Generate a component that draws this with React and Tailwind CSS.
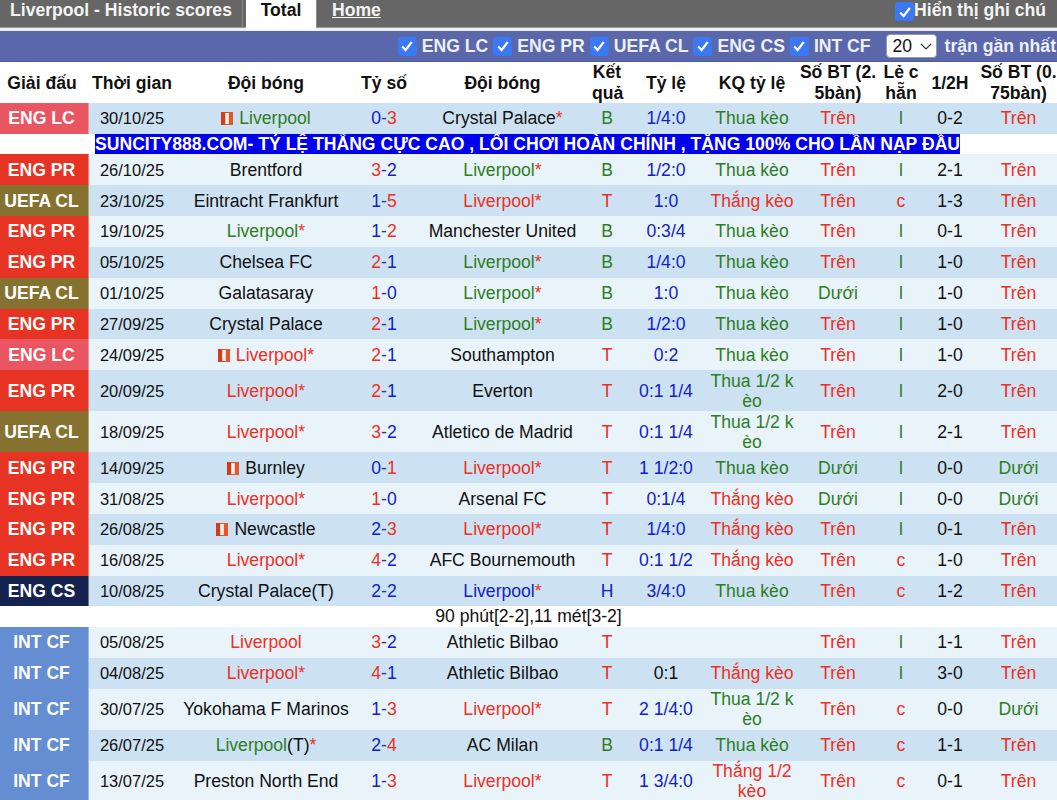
const F = "font-['Liberation_Sans',Arial,sans-serif]";
const LG = {
  "ENG LC": "bg-[#ea5562]",
  "ENG PR": "bg-[#e73323]",
  "UEFA CL": "bg-[#867230]",
  "ENG CS": "bg-[#14234f]",
  "INT CF": "bg-[#648dd2]",
};
const COLS = "grid grid-cols-[89px_82px_184px_58px_179px_30px_88px_84px_88px_38px_60px_77px]";
const CL = {
  g: "text-[#2f7d1e]",
  r: "text-[#ee2f24]",
  b: "text-[#1320c8]",
  k: "text-[#111111]",
};

function Flag() {
  return (
    <svg width="12" height="13" viewBox="0 0 12 13" className="inline-block mr-[6px] align-[-1px]">
      <rect width="12" height="13" fill="#e4572a" />
      <rect width="4" height="13" fill="#d23c1c" />
      <rect x="4.2" y="1" width="3.6" height="11" fill="#fdf3ec" />
    </svg>
  );
}

function Score({ v }) {
  const [a, b] = v.split("-");
  const ca = +a > +b ? CL.r : CL.b;
  const cb = +b > +a ? CL.r : CL.b;
  return (
    <div className="text-center whitespace-nowrap">
      <span className={ca}>{a}</span>
      <span className="text-[#333a80]">-</span>
      <span className={cb}>{b}</span>
    </div>
  );
}

function Team({ n, c = "k", flag, star, suffix, first }) {
  return (
    <div className={`text-center whitespace-nowrap ${first ? "pl-[6px]" : ""}`}>
      {flag && <Flag />}
      <span className={CL[c]}>{n}</span>
      {suffix && <span className={CL.k}>{suffix}</span>}
      {star && <span className={CL.r}>*</span>}
    </div>
  );
}

const rows = [
  { l: "ENG LC", d: "30/10/25", a: { n: "Liverpool", c: "g", flag: 1 }, s: "0-3", h: { n: "Crystal Palace", star: 1 }, r: "B", o: "1/4:0", oc: "b", k: ["Thua kèo"], kc: "g", bt: "Trên", lc: "l", hf: "0-2", b2: "Trên" },
  { banner: 1 },
  { l: "ENG PR", d: "26/10/25", a: { n: "Brentford" }, s: "3-2", h: { n: "Liverpool", c: "g", star: 1 }, r: "B", o: "1/2:0", oc: "b", k: ["Thua kèo"], kc: "g", bt: "Trên", lc: "l", hf: "2-1", b2: "Trên" },
  { l: "UEFA CL", d: "23/10/25", a: { n: "Eintracht Frankfurt" }, s: "1-5", h: { n: "Liverpool", c: "r", star: 1 }, r: "T", o: "1:0", oc: "b", k: ["Thắng kèo"], kc: "r", bt: "Trên", lc: "c", hf: "1-3", b2: "Trên" },
  { l: "ENG PR", d: "19/10/25", a: { n: "Liverpool", c: "g", star: 1 }, s: "1-2", h: { n: "Manchester United" }, r: "B", o: "0:3/4", oc: "b", k: ["Thua kèo"], kc: "g", bt: "Trên", lc: "l", hf: "0-1", b2: "Trên" },
  { l: "ENG PR", d: "05/10/25", a: { n: "Chelsea FC" }, s: "2-1", h: { n: "Liverpool", c: "g", star: 1 }, r: "B", o: "1/4:0", oc: "b", k: ["Thua kèo"], kc: "g", bt: "Trên", lc: "l", hf: "1-0", b2: "Trên" },
  { l: "UEFA CL", d: "01/10/25", a: { n: "Galatasaray" }, s: "1-0", h: { n: "Liverpool", c: "g", star: 1 }, r: "B", o: "1:0", oc: "b", k: ["Thua kèo"], kc: "g", bt: "Dưới", btc: "g", lc: "l", hf: "1-0", b2: "Trên" },
  { l: "ENG PR", d: "27/09/25", a: { n: "Crystal Palace" }, s: "2-1", h: { n: "Liverpool", c: "g", star: 1 }, r: "B", o: "1/2:0", oc: "b", k: ["Thua kèo"], kc: "g", bt: "Trên", lc: "l", hf: "1-0", b2: "Trên" },
  { l: "ENG LC", d: "24/09/25", a: { n: "Liverpool", c: "r", star: 1, flag: 1 }, s: "2-1", h: { n: "Southampton" }, r: "T", o: "0:2", oc: "b", k: ["Thua kèo"], kc: "g", bt: "Trên", lc: "l", hf: "1-0", b2: "Trên" },
  { l: "ENG PR", d: "20/09/25", a: { n: "Liverpool", c: "r", star: 1 }, s: "2-1", h: { n: "Everton" }, r: "T", o: "0:1 1/4", oc: "b", k: ["Thua 1/2 k", "èo"], kc: "g", bt: "Trên", lc: "l", hf: "2-0", b2: "Trên" },
  { l: "UEFA CL", d: "18/09/25", a: { n: "Liverpool", c: "r", star: 1 }, s: "3-2", h: { n: "Atletico de Madrid" }, r: "T", o: "0:1 1/4", oc: "b", k: ["Thua 1/2 k", "èo"], kc: "g", bt: "Trên", lc: "l", hf: "2-1", b2: "Trên" },
  { l: "ENG PR", d: "14/09/25", a: { n: "Burnley", flag: 1 }, s: "0-1", h: { n: "Liverpool", c: "r", star: 1 }, r: "T", o: "1 1/2:0", oc: "b", k: ["Thua kèo"], kc: "g", bt: "Dưới", btc: "g", lc: "l", hf: "0-0", b2: "Dưới", b2c: "g" },
  { l: "ENG PR", d: "31/08/25", a: { n: "Liverpool", c: "r", star: 1 }, s: "1-0", h: { n: "Arsenal FC" }, r: "T", o: "0:1/4", oc: "b", k: ["Thắng kèo"], kc: "r", bt: "Dưới", btc: "g", lc: "l", hf: "0-0", b2: "Dưới", b2c: "g" },
  { l: "ENG PR", d: "26/08/25", a: { n: "Newcastle", flag: 1 }, s: "2-3", h: { n: "Liverpool", c: "r", star: 1 }, r: "T", o: "1/4:0", oc: "b", k: ["Thắng kèo"], kc: "r", bt: "Trên", lc: "l", hf: "0-1", b2: "Trên" },
  { l: "ENG PR", d: "16/08/25", a: { n: "Liverpool", c: "r", star: 1 }, s: "4-2", h: { n: "AFC Bournemouth" }, r: "T", o: "0:1 1/2", oc: "b", k: ["Thắng kèo"], kc: "r", bt: "Trên", lc: "c", hf: "1-0", b2: "Trên" },
  { l: "ENG CS", d: "10/08/25", a: { n: "Crystal Palace(T)" }, s: "2-2", h: { n: "Liverpool", c: "b", star: 1 }, r: "H", o: "3/4:0", oc: "b", k: ["Thua kèo"], kc: "g", bt: "Trên", lc: "c", hf: "1-2", b2: "Trên" },
  { note: "90 phút[2-2],11 mét[3-2]" },
  { l: "INT CF", d: "05/08/25", a: { n: "Liverpool", c: "r" }, s: "3-2", h: { n: "Athletic Bilbao" }, r: "T", o: "", oc: "b", k: [""], kc: "g", bt: "Trên", lc: "l", hf: "1-1", b2: "Trên" },
  { l: "INT CF", d: "04/08/25", a: { n: "Liverpool", c: "r", star: 1 }, s: "4-1", h: { n: "Athletic Bilbao" }, r: "T", o: "0:1", oc: "k", k: ["Thắng kèo"], kc: "r", bt: "Trên", lc: "l", hf: "3-0", b2: "Trên" },
  { l: "INT CF", d: "30/07/25", a: { n: "Yokohama F Marinos" }, s: "1-3", h: { n: "Liverpool", c: "r", star: 1 }, r: "T", o: "2 1/4:0", oc: "b", k: ["Thua 1/2 k", "èo"], kc: "g", bt: "Trên", lc: "c", hf: "0-0", b2: "Dưới", b2c: "g" },
  { l: "INT CF", d: "26/07/25", a: { n: "Liverpool", c: "g", suffix: "(T)", star: 1 }, s: "2-4", h: { n: "AC Milan" }, r: "B", o: "0:1 1/4", oc: "b", k: ["Thua kèo"], kc: "g", bt: "Trên", lc: "c", hf: "1-1", b2: "Trên" },
  { l: "INT CF", d: "13/07/25", a: { n: "Preston North End" }, s: "1-3", h: { n: "Liverpool", c: "r", star: 1 }, r: "T", o: "1 3/4:0", oc: "b", k: ["Thắng 1/2", "kèo"], kc: "r", bt: "Trên", lc: "c", hf: "0-1", b2: "Trên" },
];

const RC = { B: "g", T: "r", H: "b" };

function Row({ x, alt }) {
  const tall = x.k.length > 1;
  return (
    <div className={`${COLS} items-center ${tall ? "h-[41px]" : "h-[30.85px]"} ${alt ? "bg-[#cce2f2]" : "bg-[#e8f3fa]"}`}>
      <div className={`h-full flex items-center justify-center pr-[5px] font-bold text-white border-r border-[#f3f3f3]/40 ${LG[x.l]}`}>{x.l}</div>
      <div className="text-center pl-1 text-[16.5px] text-[#111111]">{x.d}</div>
      <Team {...x.a} first />
      <Score v={x.s} />
      <Team {...x.h} />
      <div className={`text-center ${CL[RC[x.r]]}`}>{x.r}</div>
      <div className={`text-center ${CL[x.oc]}`}>{x.o}</div>
      <div className={`text-center leading-[20px] ${CL[x.kc]}`}>
        {x.k.map((t, i) => <div key={i}>{t}</div>)}
      </div>
      <div className={`text-center ${CL[x.btc || "r"]}`}>{x.bt}</div>
      <div className={`text-center ${x.lc === "c" ? CL.r : CL.g}`}>{x.lc}</div>
      <div className="text-center text-[#111111]">{x.hf}</div>
      <div className={`text-center ${CL[x.b2c || "r"]}`}>{x.b2}</div>
    </div>
  );
}

function Check() {
  return (
    <span className="inline-flex w-[19px] h-[19px] rounded-[3px] bg-[#3b78f2] items-center justify-center shrink-0">
      <svg width="14" height="14" viewBox="0 0 14 14" fill="none">
        <path d="M2.2 7.5 L5.6 11 L11.8 3" stroke="#fff" strokeWidth="2.2" />
      </svg>
    </span>
  );
}

const filters = [["ENG LC", "mr-[5px]"], ["ENG PR", "mr-[5px]"], ["UEFA CL", "mr-[5px]"], ["ENG CS", "mr-[5px]"], ["INT CF", "mr-[15px]"]];

export default function App() {
  let n = 0;
  return (
    <div className={`${F} w-[1057px] h-[800px] overflow-hidden bg-white text-[17.6px] leading-[20px]`}>
      <div className="flex h-[28px] bg-[#666666] border-b border-[#999999]">
        <div className="w-[243px] pl-[10px] font-bold text-[#f4f4f4] border-r border-[#8a8a8a]">Liverpool - Historic scores</div>
        <div className="w-[70px] h-[30px] ml-[3px] bg-white text-center font-bold text-[#111111]">Total</div>
        <div className="pl-[15px] font-bold text-[#f4f4f4] underline border-l border-[#8a8a8a]">Home</div>
        <div className="ml-auto flex items-start pr-[11px] font-bold text-[#f4f4f4]">
          <span className="mt-[2px] inline-flex"><Check /></span>
          <span>Hiển thị ghi chú</span>
        </div>
      </div>
      <div className="h-[3px] bg-[#eeeeee]" />
      <div className="flex items-center justify-end h-[31px] bg-[#5a67ab] border-b border-[#4a5a9e] pr-[1px] font-bold text-[#eef0f8]">
        {filters.map(([t, m]) => (
          <div key={t} className={`flex items-center gap-[5px] ${m}`}>
            <Check />
            <span>{t}</span>
          </div>
        ))}
        <div className="flex items-center justify-between w-[51px] h-[24px] mr-[8px] bg-white border border-[#999999] rounded-[4px] pl-[6px] pr-[4px] font-normal text-[#111111]">
          <span>20</span>
          <svg width="12" height="7" viewBox="0 0 12 7" fill="none"><path d="M1 1 L6 6 L11 1" stroke="#333" strokeWidth="1.2" /></svg>
        </div>
        <span>trận gần nhất</span>
      </div>
      <div className={`${COLS} items-center h-[41px] pb-px text-center font-bold text-[#111111] leading-[21px]`}>
        <div className="pr-[5px] whitespace-nowrap">Giải đấu</div>
        <div className="whitespace-nowrap pl-[3px]">Thời gian</div>
        <div className="pl-[6px]">Đội bóng</div>
        <div className="whitespace-nowrap">Tỷ số</div>
        <div>Đội bóng</div>
        <div>Kết<br />quả</div>
        <div>Tỷ lệ</div>
        <div>KQ tỷ lệ</div>
        <div className="whitespace-nowrap">Số BT (2.<br />5bàn)</div>
        <div>Lẻ c<br />hẵn</div>
        <div>1/2H</div>
        <div className="whitespace-nowrap">Số BT (0.<br />75bàn)</div>
      </div>
      {rows.map((x, i) => {
        if (x.banner)
          return (
            <div key={i} className="h-[20.5px] bg-white pl-[95px]">
              <span className="inline-block h-[20.5px] bg-[#0000ee] text-white font-bold leading-[20px] whitespace-nowrap">SUNCITY888.COM- TỶ LỆ THẮNG CỰC CAO , LỐI CHƠI HOÀN CHỈNH , TẶNG 100% CHO LẦN NẠP ĐẦU</span>
            </div>
          );
        if (x.note)
          return (
            <div key={i} className="h-[20.5px] bg-white text-center text-[#111111]">{x.note}</div>
          );
        n++;
        return <Row key={i} x={x} alt={i === 0 || n % 2 === 1} />;
      })}
    </div>
  );
}
